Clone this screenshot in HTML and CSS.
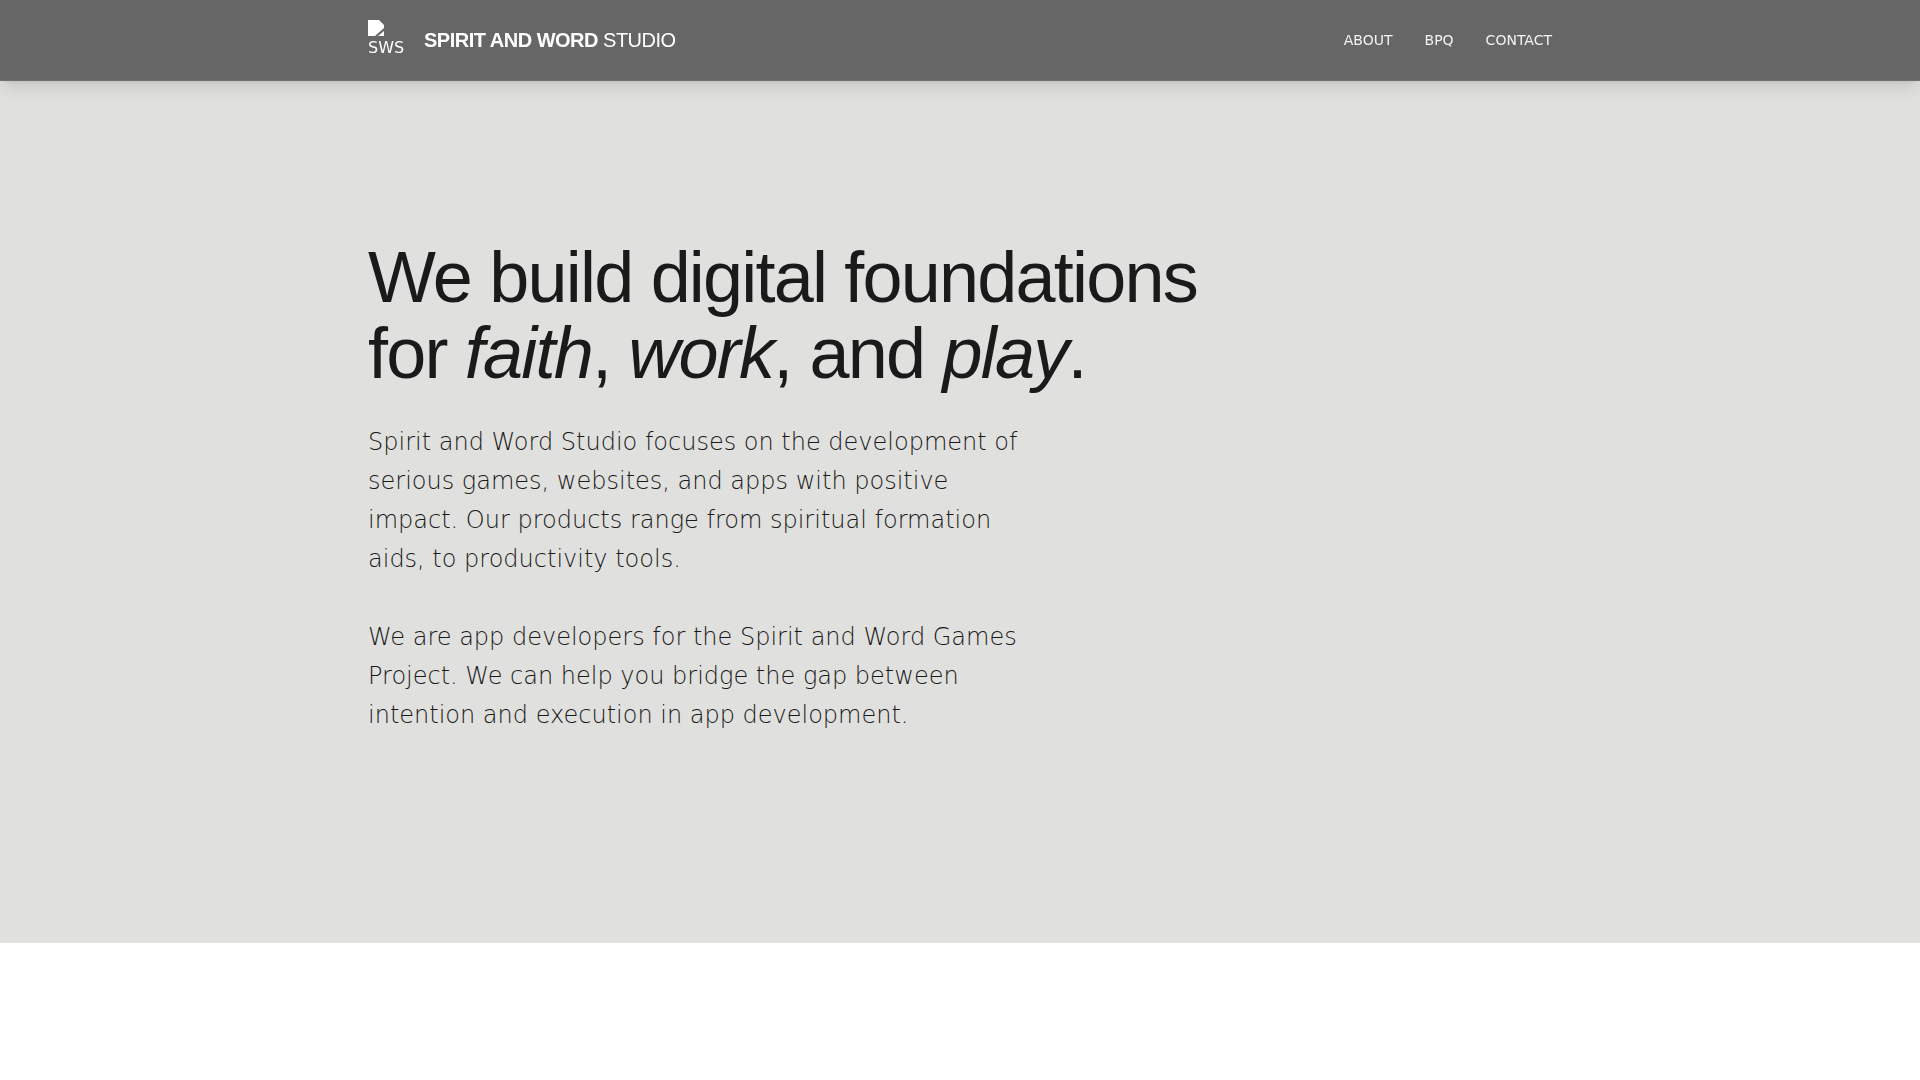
FILE: index.html
```html
<!DOCTYPE html>
<html lang="en">
<head>
  <meta charset="utf-8">
  <meta name="viewport" content="width=device-width, initial-scale=1">
  <title>Spirit and Word Studio</title>
  <link rel="stylesheet" href="styles.css">
</head>
<body>
  <header class="site-header">
    <div class="container site-header-inner">
      <a class="brand" href="#top">
        <span class="brand-logo">
          <svg class="brand-icon" viewBox="0 0 16 16" aria-hidden="true">
            <path d="M0 0H11L16 5V8L7 16H0Z M16 11V16H10Z" fill="#fff"/>
          </svg>
          <span class="brand-abbr">SWS</span>
        </span>
        <span class="brand-name"><strong>SPIRIT AND WORD</strong> STUDIO</span>
      </a>
      <nav class="site-nav">
        <a href="#about">ABOUT</a>
        <a href="#bpq">BPQ</a>
        <a href="#contact">CONTACT</a>
      </nav>
    </div>
  </header>
  <main id="top">
    <section class="hero">
      <div class="container">
        <h1 class="hero-title">We build digital foundations<br>for <em>faith</em>, <em>work</em>, and <em>play</em>.</h1>
        <div class="hero-text">
          <p>Spirit and Word Studio focuses on the development of serious games, websites, and apps with positive impact. Our products range from spiritual formation aids, to productivity tools.</p>
          <p>We are app developers for the Spirit and Word Games Project. We can help you bridge the gap between intention and execution in app development.</p>
        </div>
      </div>
    </section>
  </main>
</body>
</html>
```
FILE: styles.css
```css
*,
*::before,
*::after {
  box-sizing: border-box;
}

body {
  margin: 0;
  background: #fff;
  color: #1a1a1a;
  font-family: "DejaVu Sans", sans-serif;
  font-size: 16px;
}

.container {
  max-width: 1280px;
  margin: 0 auto;
  padding: 0 48px;
}

.site-header {
  position: fixed;
  top: 0;
  left: 0;
  right: 0;
  background: #666;
  border-bottom: 1px solid #736f6f;
  box-shadow: 0 10px 15px -3px rgba(0, 0, 0, 0.1), 0 4px 6px -4px rgba(0, 0, 0, 0.1);
}

.site-header-inner {
  display: flex;
  align-items: center;
  justify-content: space-between;
  min-height: 80px;
}

.brand {
  display: flex;
  align-items: center;
  gap: 16px;
  color: #fff;
  text-decoration: none;
}

.brand-logo {
  display: flex;
  flex-direction: column;
  width: 40px;
  height: 40px;
}

.brand-icon {
  width: 16px;
  height: 16px;
}

.brand-abbr {
  line-height: 24px;
}

.brand-name {
  font-family: "Liberation Sans", sans-serif;
  font-size: 20px;
  line-height: 28px;
  letter-spacing: -0.025em;
}

.site-nav {
  display: flex;
  gap: 32px;
  font-size: 14px;
  line-height: 20px;
}

.site-nav a {
  color: #f2f2f2;
  text-decoration: none;
}

.hero {
  padding: 240px 0 208px;
  background: #e0e0de;
}

.hero-title {
  margin: 0 0 32px;
  font-family: "Liberation Sans", sans-serif;
  font-size: 72px;
  font-weight: 400;
  line-height: 1.05;
  letter-spacing: -0.025em;
}

.hero-text {
  display: grid;
  gap: 39px;
  max-width: 672px;
  font-size: 24px;
  font-weight: 200;
  line-height: 39px;
}

.hero-text p {
  margin: 0;
}
```
